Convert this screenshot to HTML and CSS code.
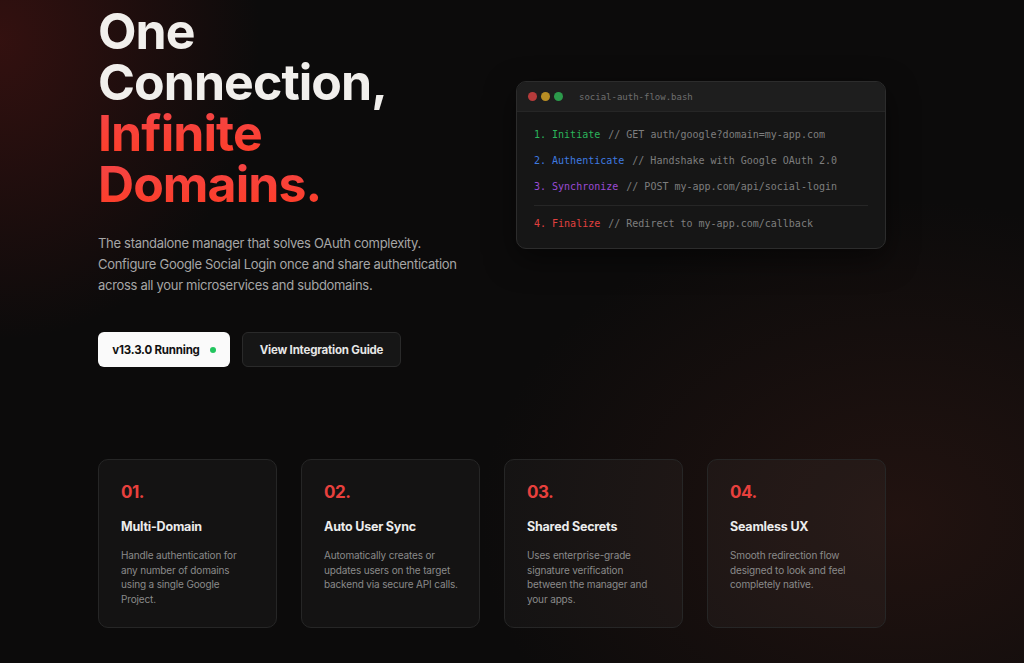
FILE: index.html
```html
<!DOCTYPE html>
<html lang="en">
<head>
<meta charset="utf-8">
<title>Social Auth Manager</title>
<link rel="stylesheet" href="styles.css">
</head>
<body>
<main class="page">
  <section class="hero">
    <div class="hero-text">
      <h1 class="headline">
        <span class="line-white">One<br>Connection,</span><br>
        <span class="line-red">Infinite<br>Domains.</span>
      </h1>
      <p class="lead">The standalone manager that solves OAuth complexity. Configure Google Social Login once and share authentication across all your microservices and subdomains.</p>
      <div class="actions">
        <a class="btn btn-light" href="#">v13.3.0 Running <span class="status-dot"></span></a>
        <a class="btn btn-dark" href="#">View Integration Guide</a>
      </div>
    </div>
    <div class="terminal">
      <div class="terminal-bar">
        <span class="dot dot-red"></span>
        <span class="dot dot-yellow"></span>
        <span class="dot dot-green"></span>
        <span class="terminal-title">social-auth-flow.bash</span>
      </div>
      <div class="terminal-body">
        <div class="code-line"><span class="step green">1. Initiate</span><span class="comment">// GET auth/google?domain=my-app.com</span></div>
        <div class="code-line"><span class="step blue">2. Authenticate</span><span class="comment">// Handshake with Google OAuth 2.0</span></div>
        <div class="code-line"><span class="step purple">3. Synchronize</span><span class="comment">// POST my-app.com/api/social-login</span></div>
        <div class="code-divider"></div>
        <div class="code-line"><span class="step red">4. Finalize</span><span class="comment">// Redirect to my-app.com/callback</span></div>
      </div>
    </div>
  </section>

  <section class="features">
    <article class="card">
      <div class="card-num">01.</div>
      <h3 class="card-title">Multi-Domain</h3>
      <p class="card-text">Handle authentication for any number of domains using a single Google Project.</p>
    </article>
    <article class="card">
      <div class="card-num">02.</div>
      <h3 class="card-title">Auto User Sync</h3>
      <p class="card-text">Automatically creates or updates users on the target backend via secure API calls.</p>
    </article>
    <article class="card">
      <div class="card-num">03.</div>
      <h3 class="card-title">Shared Secrets</h3>
      <p class="card-text">Uses enterprise-grade signature verification between the manager and your apps.</p>
    </article>
    <article class="card">
      <div class="card-num">04.</div>
      <h3 class="card-title">Seamless UX</h3>
      <p class="card-text">Smooth redirection flow designed to look and feel completely native.</p>
    </article>
  </section>
</main>
</body>
</html>
```
FILE: styles.css
```css
* { box-sizing: border-box; }

html, body {
  margin: 0;
  height: 100%;
}

body {
  font-family: "Inter", "Noto Sans", sans-serif;
  color: #ededed;
  background-color: #0c0b0b;
  background-image:
    radial-gradient(ellipse 260px 300px at 0px 40px, rgba(90, 22, 20, 0.5), rgba(90, 22, 20, 0) 100%),
    radial-gradient(ellipse 420px 320px at 900px 520px, rgba(60, 28, 22, 0.45), rgba(60, 28, 22, 0) 100%);
  overflow: hidden;
}

.page {
  width: 788px;
  margin-left: 98px;
  padding-top: 6px;
}

.hero {
  display: flex;
  justify-content: space-between;
  align-items: flex-start;
}

.hero-text {
  width: 380px;
}

.headline {
  margin: 0;
  font-size: 50px;
  line-height: 51px;
  font-weight: 700;
  letter-spacing: -0.95px;
}

.line-white { color: #f1efec; }

.line-red {
  background: linear-gradient(180deg, #f2454a 0%, #ff3d24 100%);
  -webkit-background-clip: text;
  background-clip: text;
  color: transparent;
}

.lead {
  margin: 23px 0 0;
  font-size: 13px;
  line-height: 21px;
  color: #a6a6a6;
  letter-spacing: -0.3px;
}

.actions {
  display: flex;
  gap: 12px;
  margin-top: 36px;
}

.btn {
  display: inline-flex;
  align-items: center;
  justify-content: center;
  height: 35px;
  border-radius: 6px;
  font-size: 11.5px;
  font-weight: 700;
  text-decoration: none;
  letter-spacing: -0.2px;
}

.btn-light {
  width: 132px;
  background: #fafafa;
  color: #111;
  gap: 10px;
}

.status-dot {
  width: 6px;
  height: 6px;
  border-radius: 50%;
  background: #22c55e;
}

.btn-dark {
  width: 159px;
  background: #161616;
  border: 1px solid #2a2a2a;
  color: #e6e6e6;
}

.terminal {
  width: 370px;
  margin-top: 75px;
  border: 1px solid #2c2c2c;
  border-radius: 10px;
  background: #161616;
  overflow: hidden;
  box-shadow: 0 10px 30px rgba(0, 0, 0, 0.5);
}

.terminal-bar {
  display: flex;
  align-items: center;
  gap: 4px;
  height: 30px;
  padding-left: 11px;
  background: #1e1e1e;
  border-bottom: 1px solid #262626;
}

.dot {
  width: 9px;
  height: 9px;
  border-radius: 50%;
}

.dot-red { background: #b53b3b; }
.dot-yellow { background: #b88d24; }
.dot-green { background: #2c9a4b; }

.terminal-title {
  margin-left: 12px;
  font-family: "DejaVu Sans Mono", "Liberation Mono", monospace;
  font-size: 9px;
  color: #6f6f6f;
}

.terminal-body {
  padding: 10px 17px 11px 17px;
  font-family: "DejaVu Sans Mono", "Liberation Mono", monospace;
  font-size: 10px;
}

.code-line {
  height: 26px;
  line-height: 26px;
  white-space: nowrap;
}

.code-divider {
  height: 1px;
  background: #262626;
  margin: 5px 0 5px;
}

.step { margin-right: 8px; }
.green { color: #2bb45a; }
.blue { color: #3f7ae0; }
.purple { color: #9a4bd4; }
.red { color: #e0403f; }
.comment { color: #7e7e7e; }

.features {
  display: grid;
  grid-template-columns: repeat(4, 1fr);
  gap: 24px;
  margin-top: 92px;
}

.card {
  height: 169px;
  padding: 22px 21px 0 22px;
  border: 1px solid #262626;
  border-radius: 10px;
  background: rgba(255, 255, 255, 0.035);
}

.card-num {
  font-size: 17px;
  line-height: 20px;
  font-weight: 700;
  color: #e8403d;
  letter-spacing: -0.5px;
}

.card-title {
  margin: 17px 0 0;
  font-size: 12.5px;
  line-height: 16px;
  font-weight: 700;
  color: #ececec;
  letter-spacing: -0.2px;
}

.card-text {
  margin: 13px 0 0;
  font-size: 10px;
  line-height: 14.5px;
  color: #8a8a8a;
  letter-spacing: -0.15px;
}
```
